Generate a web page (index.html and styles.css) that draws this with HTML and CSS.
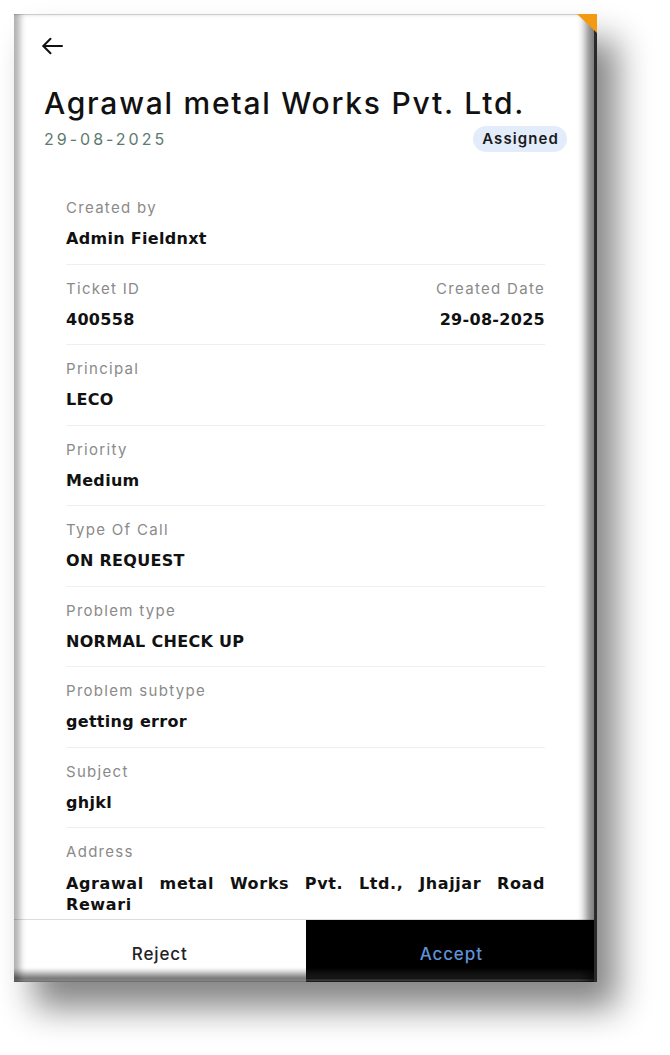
FILE: index.html
```html
<!DOCTYPE html>
<html lang="en">
<head>
  <meta charset="UTF-8" />
  <meta name="viewport" content="width=device-width, initial-scale=1.0"/>
  <title>Ticket Details</title>
  <link rel="stylesheet" href="styles.css">
</head>
<body>

  <div class="screen">
    <div class="header">
      <button class="back" aria-label="Back">
        <svg width="22" height="18" viewBox="0 0 22 18" fill="none" stroke="#111" stroke-width="2" stroke-linecap="round" stroke-linejoin="round">
          <path d="M21 9H2.5"/>
          <path d="M9.5 1.8L2.3 9l7.2 7.2"/>
        </svg>
      </button>
      <h1 class="title">Agrawal metal Works Pvt. Ltd.</h1>
      <div class="meta">
        <span class="date">29-08-2025</span>
        <span class="badge">Assigned</span>
      </div>
    </div>

    <div class="details">
      <div class="row">
        <div class="label">Created by</div>
        <div class="value">Admin Fieldnxt</div>
      </div>
      <div class="row split">
        <div>
          <div class="label">Ticket ID</div>
          <div class="value">400558</div>
        </div>
        <div class="right">
          <div class="label">Created Date</div>
          <div class="value">29-08-2025</div>
        </div>
      </div>
      <div class="row">
        <div class="label">Principal</div>
        <div class="value">LECO</div>
      </div>
      <div class="row">
        <div class="label">Priority</div>
        <div class="value">Medium</div>
      </div>
      <div class="row">
        <div class="label">Type Of Call</div>
        <div class="value">ON REQUEST</div>
      </div>
      <div class="row">
        <div class="label">Problem type</div>
        <div class="value">NORMAL CHECK UP</div>
      </div>
      <div class="row">
        <div class="label">Problem subtype</div>
        <div class="value">getting error</div>
      </div>
      <div class="row">
        <div class="label">Subject</div>
        <div class="value">ghjkl</div>
      </div>
      <div class="row last">
        <div class="label">Address</div>
        <div class="value address">Agrawal metal Works Pvt. Ltd., Jhajjar Road Rewari</div>
      </div>
    </div>

    <div class="actions">
      <button class="btn reject">Reject</button>
      <button class="btn accept">Accept</button>
    </div>
  </div>

</body>
</html>
```

FILE: styles.css
```css
body {
  margin: 0;
  min-height: 100vh;
  background: #fff;
  font-family: Inter, "Noto Sans", sans-serif;
  color: #111;
  overflow: hidden;
}

.screen {
  position: relative;
  margin: 14px 0 0 14px;
  width: 583px;
  height: 968px;
  background: #fff;
  display: flex;
  flex-direction: column;
  overflow: hidden;
  box-shadow: 20px 26px 32px rgba(0, 0, 0, 0.48);
}

/* bevelled frame drawn over the content */
.screen::after {
  content: "";
  position: absolute;
  inset: 0;
  pointer-events: none;
  border-right: 3px solid #2a2a2a;
  box-shadow:
    inset 9px 0 6px -3px rgba(0, 0, 0, 0.3),
    inset -13px 0 8px -5px rgba(0, 0, 0, 0.5),
    inset 0 -14px 7px -6px rgba(0, 0, 0, 0.45),
    inset 0 1px 0 rgba(0, 0, 0, 0.12);
  background: linear-gradient(to bottom, rgba(255, 255, 255, 0) 0, rgba(120, 120, 120, 0.35) 11px, rgba(255, 255, 255, 0.5) 12px, rgba(120, 120, 120, 0.3) 14px) left bottom / 100% 14px no-repeat;
}

/* orange corner fold */
.screen::before {
  content: "";
  position: absolute;
  top: 0;
  right: 0;
  width: 20px;
  height: 19px;
  background: #f39a12;
  clip-path: polygon(0 0, 100% 0, 100% 100%);
  z-index: 2;
}

.header {
  padding: 23px 30px 0 26px;
}

.back {
  display: block;
  background: none;
  border: none;
  padding: 0;
  margin-left: 1px;
  height: 20px;
  cursor: pointer;
}

.title {
  margin: 28px 0 0 4px;
  font-size: 30px;
  font-weight: 500;
  line-height: 36px;
  letter-spacing: 1.75px;
  white-space: nowrap;
}

.meta {
  display: flex;
  justify-content: space-between;
  align-items: center;
  margin: 5px 0 0 4px;
}

.date {
  font-size: 16px;
  color: #5d7a6f;
  letter-spacing: 3px;
}

.badge {
  background: #e2ecfb;
  border-radius: 13px;
  padding: 3px 8px 3px 9px;
  font-size: 15px;
  font-weight: 600;
  line-height: 20px;
  letter-spacing: 1.1px;
  color: #1a1a1a;
}

.details {
  flex: 1;
  overflow: hidden;
  padding: 32px 52px 0 52px;
}

.row {
  padding: 14px 0 14.5px;
  border-bottom: 1px solid #efefef;
}

.row.last {
  border-bottom: none;
}

.split {
  display: flex;
  justify-content: space-between;
}

.split .right {
  text-align: right;
}

.label {
  font-size: 15px;
  line-height: 20px;
  color: #8a8a8a;
  letter-spacing: 1.3px;
}

.value {
  margin-top: 11px;
  font-family: "DejaVu Sans", sans-serif;
  font-size: 16px;
  line-height: 20px;
  font-weight: 700;
  letter-spacing: 0.3px;
  color: #111;
}

.address {
  text-align: justify;
  line-height: 21px;
  letter-spacing: 0.6px;
}

.actions {
  display: flex;
  border-top: 1px solid #dcdcdc;
}

.btn {
  flex: 1;
  border: none;
  padding: 24px 0 18px;
  font-family: inherit;
  font-size: 17px;
  font-weight: 500;
  line-height: 20px;
  letter-spacing: 0.9px;
  cursor: pointer;
}

.reject {
  background: #fff;
  color: #222;
}

.accept {
  background: #000;
  color: #5f93d8;
}
```
